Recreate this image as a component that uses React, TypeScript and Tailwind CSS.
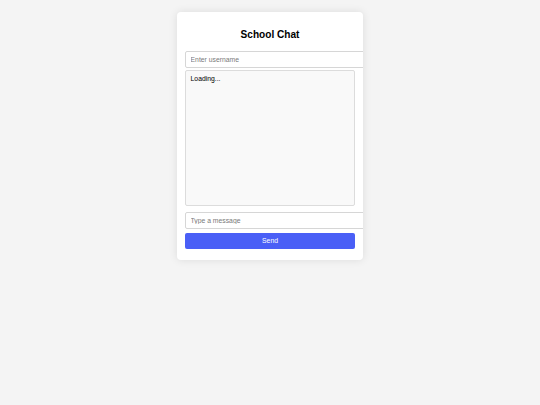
import React from "react";

export default function App() {
  return (
    <div
      className="min-h-[405px] w-full bg-[#f4f4f4] pt-[12px]"
      style={{ fontFamily: '"Liberation Sans", Arial, sans-serif' }}
    >
      <div className="mx-auto flex w-[186px] flex-col overflow-hidden rounded-[4px] bg-white px-[8.4px] pb-[11px] pt-[17px] shadow-[0_0_8px_rgba(0,0,0,0.1)]">
        <h2 className="mb-[10px] text-center text-[10.1px] font-bold leading-[12px] text-black">
          School Chat
        </h2>
        <input
          type="text"
          placeholder="Enter username"
          className="box-border h-[17px] w-[182px] shrink-0 rounded-[2px] border-[0.5px] border-[#d6d6d6] bg-white px-[4.2px] text-[6.8px] text-black outline-none placeholder:text-[#7a7a7a]"
        />
        <div className="mt-[2px] box-border h-[136px] w-full rounded-[2px] border-[0.5px] border-[#dcdcdc] bg-[#f9f9f9] p-[4.2px] text-[6.8px] leading-[8px] text-black">
          Loading...
        </div>
        <input
          type="text"
          placeholder="Type a message"
          className="mt-[6px] box-border h-[16.9px] w-[182px] shrink-0 rounded-[2px] border-[0.5px] border-[#d6d6d6] bg-white px-[4.2px] text-[6.8px] text-black outline-none placeholder:text-[#7a7a7a]"
        />
        <button className="mt-[4px] h-[16px] w-full rounded-[2px] bg-[#4a5ff6] text-center text-[6.8px] leading-[16px] text-white">
          Send
        </button>
      </div>
    </div>
  );
}
